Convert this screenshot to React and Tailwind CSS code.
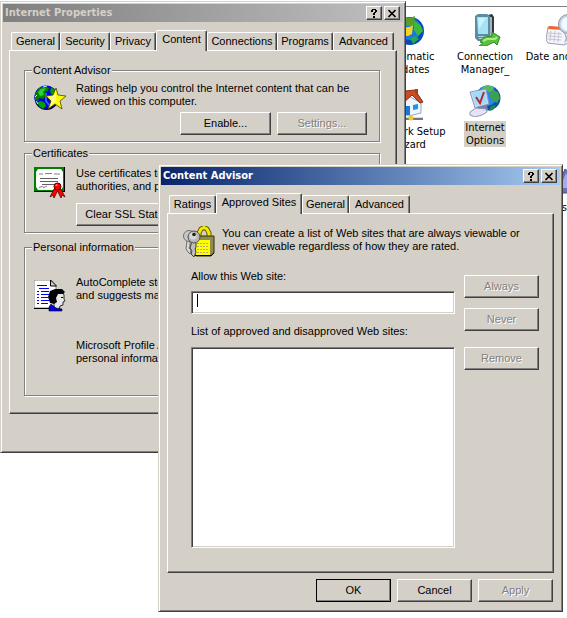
import { useState } from "react";
import clsx from "clsx";

const RAISED =
  "border border-t-white border-l-white border-r-[#404040] border-b-[#404040] shadow-[inset_-1px_-1px_0_#808080]";
const SUNKEN =
  "border border-t-[#808080] border-l-[#808080] border-r-white border-b-white shadow-[inset_1px_1px_0_#404040,inset_-1px_-1px_0_#d4d0c8]";

function Button({ children, disabled, isDefault, className }) {
  return (
    <button
      type="button"
      disabled={disabled}
      className={clsx(
        "h-[23px] shrink-0 bg-[#d4d0c8] text-center leading-[13px] whitespace-nowrap",
        RAISED,
        disabled && "text-[#808080] [text-shadow:1px_1px_0_#fff]",
        isDefault && "outline outline-1 -outline-offset-1 outline-black",
        className,
      )}
    >
      {children}
    </button>
  );
}

function CaptionButton({ label, children }) {
  return (
    <button
      type="button"
      aria-label={label}
      className={clsx("flex h-3.5 w-4 items-center justify-center bg-[#d4d0c8] text-black", RAISED)}
    >
      <svg width="10" height="9" viewBox="0 0 10 9" fill="none" stroke="currentColor" aria-hidden>
        {children}
      </svg>
    </button>
  );
}

function Dialog({ title, active, className, children }) {
  return (
    <section
      aria-label={title}
      className={clsx(
        "z-10 self-start border border-t-[#d4d0c8] border-r-[#404040] border-b-[#404040] border-l-[#d4d0c8] bg-[#d4d0c8] p-0.5 shadow-[inset_1px_1px_0_#fff,inset_-1px_-1px_0_#808080] [grid-area:1/1]",
        className,
      )}
    >
      <header
        className={clsx(
          "flex h-[18px] items-center bg-linear-to-r pr-[3px] pl-0.5",
          active ? "from-[#0a246a] to-[#a6caf0] text-white" : "from-[#808080] to-[#c0c0c0] text-[#d4d0c8]",
        )}
      >
        <h2 className="flex-1 truncate font-['DejaVu_Sans_Condensed','DejaVu_Sans',sans-serif] text-[11px] leading-4 font-bold">
          {title}
        </h2>
        <div className="flex gap-0.5">
          <CaptionButton label="Help">
            <g fill="currentColor" stroke="none" shapeRendering="crispEdges">
              <path d="M3 0H7V1H3ZM2 1H4V3H2ZM6 1H8V3H6ZM5 3H7V4H5ZM4 4H6V6H4ZM4 7H6V9H4Z" />
            </g>
          </CaptionButton>
          <CaptionButton label="Close">
            <path d="M1.5 1L8.5 8M8.5 1L1.5 8" strokeWidth="1.7" />
          </CaptionButton>
        </div>
      </header>
      <div className="px-1.5 pt-2">{children}</div>
    </section>
  );
}

function Tabs({ tabs, initial }) {
  const [current, setCurrent] = useState(initial);
  return (
    <div role="tablist" className="flex h-5 items-end pl-0.5">
      {tabs.map(({ name, width }) => (
        <button
          key={name}
          type="button"
          role="tab"
          aria-selected={name === current}
          onClick={() => setCurrent(name)}
          className={clsx(
            "shrink-0 rounded-t-[2px] border-t border-r border-l border-t-white border-r-[#404040] border-l-white bg-[#d4d0c8] text-center leading-[13px] whitespace-nowrap shadow-[inset_-1px_0_0_#808080]",
            name === current ? "z-10 -mb-px h-[21px] pb-1" : "h-[18px]",
            width,
          )}
        >
          {name}
        </button>
      ))}
    </div>
  );
}

function Group({ title, className, children }) {
  return (
    <fieldset
      className={clsx(
        "min-w-0 border border-[#808080] pr-3 pb-1.5 pl-[9px] shadow-[inset_1px_1px_0_#fff,1px_1px_0_#fff]",
        className,
      )}
    >
      <legend className="-ml-0.5 bg-[#d4d0c8] px-px leading-[13px]">{title}</legend>
      {children}
    </fieldset>
  );
}

function RatingsIcon() {
  return (
    <svg width="32" height="26" viewBox="0 0 32 26" className="shrink-0" aria-hidden>
      <circle cx="12.500" cy="13" r="12" fill="#000040" />
      <circle cx="12" cy="12" r="11.500" fill="#0000e0" />
      <path d="M1 9L5 3L11 1L15 3L14 6L11 7L12 11L9 14L5 13L4 16L1 15Z" fill="#008000" />
      <path d="M4 7L7 4L12 3L9 7L10 10L6 11Z" fill="#30d030" />
      <path d="M3 17L7 16L11 18L12 21L9 24L5 21Z" fill="#00a000" />
      <path d="M17 2L21 5L23 9L19 11L16 7Z" fill="#00a000" />
      <path d="M1 12L3 10M2 16L4 19M9 2L13 1" stroke="#a0ffff" />
      <path d="M12 8V16L16 21" stroke="#3060ff" strokeWidth="2" fill="none" />
      <path
        d="M22 3L24 10L32 11L26 16L28 24L21 19L14 24L17 16L12 11L19 10Z"
        fill="#ffff00"
        stroke="#504000"
        strokeWidth=".8"
      />
      <path d="M22 5V16L16 21L18 15L14 12L20 11Z" fill="#fff" opacity=".6" />
    </svg>
  );
}

function CertificateIcon() {
  return (
    <svg width="32" height="32" viewBox="0 0 32 32" className="shrink-0" aria-hidden>
      <path d="M0 0H31V25H0Z" fill="#008000" />
      <path d="M0 24.5H31M30.5 0V25" stroke="#000" />
      <path d="M4 2H27L29 5V20L27 23H4L2 20V5Z" fill="#fff" />
      <path d="M5 7H9M11 6.5H18M20 7H26" stroke="#808080" />
      <path d="M6 11.5H24M6 14.5H24M8 17.5H20" stroke="#606060" />
      <path d="M5 20.5L8 19.5L10 20.5L13 19" stroke="#808080" fill="none" />
      <path
        d="M20 22L16 30L19 28L20 31L23.500 24L27 31L28 28L31 30L27 22Z"
        fill="#ff0000"
        stroke="#600000"
        strokeWidth=".8"
      />
      <circle cx="23.5" cy="19.5" r="3.500" fill="#ff0000" stroke="#400000" />
      <path d="M22 19V18H23.500" stroke="#ffb0b0" fill="none" />
    </svg>
  );
}

function PersonalIcon() {
  return (
    <svg width="32" height="32" viewBox="0 0 32 32" className="shrink-0" aria-hidden>
      <path d="M0 0H17L22 6V28H0Z" fill="#fff" stroke="#808080" />
      <path d="M0 28.5H20" stroke="#000" />
      <path d="M16.5 0V6H22.5Z" stroke="#000" fill="#d4d0c8" />
      <path
        d="M3 5.5H13M5 8.5H15M3 11.5H5M7 11.5H15M3 14.5H5M7 14.5H15M3 17.5H5M7 17.5H14M3 20.5H5M7 20.5H15M3 23.5H5M7 23.5H14"
        stroke="#0000ff"
      />
      <path d="M21 13L28 11L30 15V19L31 21L29 22V25L26 26L25 30H20V20Z" fill="#e8e8e8" stroke="#000" strokeWidth=".8" />
      <path d="M14 17L16 11L21 9H28L31 12L29 14H24L22 18L23 22L20 24L16 23Z" fill="#000" />
      <path d="M17 24L22 28L28 29V31H15V27Z" fill="#0000e0" stroke="#000" strokeWidth=".6" />
      <path d="M27 17.5H29" stroke="#000" />
    </svg>
  );
}

function LockIcon() {
  return (
    <svg width="32" height="32" viewBox="0 0 32 32" className="shrink-0" aria-hidden>
      <path d="M16 14V7L18 3L21 1.500L24 3L26 7V14" fill="none" stroke="#605800" strokeWidth="5" />
      <path d="M16 14V7L18 3L21 1.500L24 3L26 7V14" fill="none" stroke="#f4ec00" strokeWidth="3" />
      <path d="M13 14L16 10H31V27L28 30H13Z" fill="#908c50" stroke="#303000" />
      <path d="M13 14H27V29H13Z" fill="#ffff00" />
      <path d="M14 17.500H26M14 20.500H26M14 23.500H26M14 26.500H26" stroke="#b8b060" strokeDasharray="2 1" />
      <path d="M12 29.500H28L31 27" fill="none" stroke="#000" />
      <path d="M4 14L7 16V20L6 22L8 24L7 28L5 26L3 23Z" fill="#d8d8d8" stroke="#707070" />
      <path d="M9 15L13 17V21L12 23L13 26L11 31L8 28L9 25L7 22Z" fill="#c0c0c0" stroke="#404040" />
      <circle cx="6" cy="10" r="5.500" fill="#c8c8c8" stroke="#707070" />
      <circle cx="11" cy="11" r="6" fill="#b8b8b8" stroke="#505050" />
      <circle cx="10" cy="10" r="3.500" fill="#d8d8d8" />
      <circle cx="11" cy="8.500" r="1.800" fill="#202020" />
    </svg>
  );
}

function UpdatesIcon() {
  return (
    <svg width="32" height="32" viewBox="0 0 32 32" aria-hidden>
      <circle cx="17" cy="17" r="14" fill="#0648bd" />
      <circle cx="17" cy="15" r="11" fill="#1677e8" />
      <path d="M21 7Q28 9 30 17L25 22L21 16Z" fill="#3cb93c" />
      <path d="M17 24L23 22L26 25L20 30Z" fill="#28a745" />
      <path d="M2 5L11 3V12L1 14Z" fill="#e5502c" />
      <path d="M11 2Q16 5 22 2L21 11Q17 13 11 11Z" fill="#5a9e2a" />
      <path d="M1 14L10 12V22L0 23Z" fill="#2674df" />
      <path d="M10 12Q15 15 20 11L19 20Q15 23 9 22Z" fill="#f7d51d" />
    </svg>
  );
}

function ConnectionIcon() {
  return (
    <svg width="32" height="32" viewBox="0 0 32 32" aria-hidden>
      <path d="M19 1L23 0L25 3V22L22 26L19 24Z" fill="#303840" />
      <path d="M22 3V22" stroke="#a6b4c0" strokeWidth="2" />
      <path d="M6 2L9 0H18L21 2V23L19 27H9L6 24Z" fill="#5c8ca4" />
      <path d="M8 3H19V20H9Z" fill="#a4e2f4" />
      <path d="M9 4H17L10 15Z" fill="#ccf2fc" />
      <path d="M9 22.500H19M10 24.500H18" stroke="#b0d4e0" />
      <path d="M11 28L15 23L23 22V18L31 23L28 31L25 28L17 32H10L14 29Z" fill="#5cc040" stroke="#2c8824" />
      <path d="M14 27L18 25L26 25L28 23" stroke="#a5ed80" strokeWidth="2" fill="none" />
    </svg>
  );
}

function DateIcon() {
  return (
    <svg width="32" height="32" viewBox="0 0 32 32" aria-hidden>
      <path d="M2 13L17 14L22 29L18 31L2 29L0 26Z" fill="#f5f5fb" stroke="#9a9db5" />
      <path d="M3 12L18 13V16L2 15Z" fill="#f0662c" />
      <path d="M2 19L16 20M2 22L16 23M1 25L15 26M5 17L4 27M9 17L8 28M13 18L12 28" stroke="#ccc4d4" />
      <path d="M18 30L24 22L21 20Z" fill="#a7acca" />
      <circle cx="22" cy="10" r="9.500" fill="#c5d4e5" stroke="#8794aa" />
      <circle cx="22" cy="10" r="7" fill="#eefaff" />
      <path d="M22 4V10H26" stroke="#d05030" fill="none" />
    </svg>
  );
}

function NetworkIcon() {
  return (
    <svg width="32" height="32" viewBox="0 0 32 32" aria-hidden>
      <path d="M4 14L14 6L28 14V24L16 27L4 22Z" fill="#eef5ff" stroke="#90a8c4" />
      <path d="M1 14L12 2L22 1L30 13L27 14L19 6L8 16Z" fill="#c84c24" stroke="#8c3018" />
      <path d="M22 0H25V7L22 4Z" fill="#a84020" />
      <path d="M13 17H17V26H13Z" fill="#1579d8" />
      <path d="M20 16L25 15V20L20 21Z" fill="#2390ee" />
      <path d="M2 29.500H30" stroke="#777" strokeWidth="3" />
      <path d="M3 28.500H30" stroke="#d8d8d8" />
      <circle cx="18" cy="29" r="2.500" fill="#f6c728" />
    </svg>
  );
}

function InternetIcon() {
  return (
    <svg width="32" height="32" viewBox="0 0 32 32" aria-hidden>
      <circle cx="19" cy="13" r="12.500" fill="#0b4fae" />
      <circle cx="18" cy="11" r="10" fill="#2689ea" />
      <path d="M12 3L18 0L25 2L24 6L20 7L17 5Z" fill="#58b860" />
      <path d="M23 5L29 7L31 13L28 18L23 15L20 10Z" fill="#3ca04c" />
      <path d="M22 21L27 20L24 25L20 26Z" fill="#1f8a4d" />
      <path d="M1 7L17 4L20 19L6 23Z" fill="#d1d5e8" stroke="#7c9cc4" />
      <path d="M3 8L16 6L18 18L7 20Z" fill="#9bddff" />
      <path d="M7 12L11 18L15 7" stroke="#b52b2b" strokeWidth="2" fill="none" />
      <path d="M8 22L18 20L19 25L8 26Z" fill="#7780a7" />
      <path d="M1 27L7 23L17 24L18 27L13 30L6 32L1 30Z" fill="#e2e4f3" stroke="#9095b7" />
    </svg>
  );
}

function PurpleIcon() {
  return (
    <svg width="32" height="32" viewBox="0 0 32 32" aria-hidden>
      <path d="M14 4L19 8L25 24V28H6V23Z" fill="#6b6fc0" stroke="#4b4f96" />
      <path d="M15 8L21 23H9Z" fill="#a7abeb" />
    </svg>
  );
}

const shortcuts = [
  { lines: ["Automatic", "Updates"], icon: <UpdatesIcon />, place: "left-[369px] top-3.5" },
  { lines: ["Connection", "Manager_"], icon: <ConnectionIcon />, place: "left-[445px] top-3.5" },
  { lines: ["Date and Time"], icon: <DateIcon />, place: "left-[522px] top-3.5" },
  { lines: ["Network Setup", "Wizard"], icon: <NetworkIcon />, place: "left-[369px] top-[89px]" },
  { lines: ["Internet", "Options"], icon: <InternetIcon />, place: "left-[445px] top-[85px]", selected: true },
  { lines: ["ss"], icon: <PurpleIcon />, place: "left-[527px] top-[165px]" },
];

function Shortcut({ lines, icon, place, selected }) {
  return (
    <a
      href="#"
      className={clsx(
        "absolute flex w-20 flex-col items-center gap-1 text-center font-['DejaVu_Sans_Condensed','DejaVu_Sans',sans-serif] text-[11px] leading-[13px] whitespace-nowrap",
        place,
      )}
    >
      {icon}
      <span className={clsx("px-px", selected && "bg-[#d4d0c8]")}>
        {lines.map((line) => (
          <span key={line} className="block">
            {line}
          </span>
        ))}
      </span>
    </a>
  );
}

const propertyTabs = [
  { name: "General", width: "w-[49px]" },
  { name: "Security", width: "w-[50px]" },
  { name: "Privacy", width: "w-[46px]" },
  { name: "Content", width: "w-[51px]" },
  { name: "Connections", width: "w-[70px]" },
  { name: "Programs", width: "w-[56px]" },
  { name: "Advanced", width: "w-[61px]" },
];

const advisorTabs = [
  { name: "Ratings", width: "w-[47px]" },
  { name: "Approved Sites", width: "w-[86px]" },
  { name: "General", width: "w-[47px]" },
  { name: "Advanced", width: "w-[61px]" },
];

function InternetProperties() {
  return (
    <Dialog title="Internet Properties" className="mt-px mr-[161px]">
      <Tabs tabs={propertyTabs} initial="Content" />
      <div role="tabpanel" className={clsx("mb-9 pt-[13px] pr-4 pb-[17px] pl-3.5", RAISED)}>
        <Group title="Content Advisor">
          <div className="flex gap-2.5 pt-[5px]">
            <div className="pt-[3px]">
              <RatingsIcon />
            </div>
            <div className="min-w-0 flex-1">
              <p className="whitespace-nowrap">
                Ratings help you control the Internet content that can be
                <br />
                viewed on this computer.
              </p>
              <div className="mt-1 flex justify-end gap-1.5">
                <Button className="w-[91px]">Enable...</Button>
                <Button className="w-[90px]" disabled>
                  Settings...
                </Button>
              </div>
            </div>
          </div>
        </Group>
        <Group title="Certificates" className="mt-[5px]">
          <div className="flex gap-2.5 pt-[7px]">
            <CertificateIcon />
            <div className="min-w-0 flex-1">
              <p className="whitespace-nowrap">
                Use certificates to positively identify yourself, certification
                <br />
                authorities, and publishers.
              </p>
              <Button className="mt-2.5 block w-[97px]">Clear SSL State</Button>
            </div>
          </div>
        </Group>
        <Group title="Personal information" className="mt-2">
          <div className="flex gap-2.5 pt-[22px] pb-6">
            <div className="pt-1">
              <PersonalIcon />
            </div>
            <div className="min-w-0 flex-1 whitespace-nowrap">
              <p>
                AutoComplete stores previous entries
                <br />
                and suggests matches for you.
              </p>
              <p className="mt-[37px]">
                Microsoft Profile Assistant stores your
                <br />
                personal information.
              </p>
            </div>
          </div>
        </Group>
      </div>
    </Dialog>
  );
}

function ContentAdvisor() {
  const [site, setSite] = useState("");
  return (
    <Dialog title="Content Advisor" active className="mt-[164px] mr-1 ml-[158px]">
      <Tabs tabs={advisorTabs} initial="Approved Sites" />
      <div role="tabpanel" className={clsx("pt-3 pr-3.5 pb-6 pl-[23px]", RAISED)}>
        <div className="-ml-2 flex gap-[7px]">
          <LockIcon />
          <p className="pt-px whitespace-nowrap">
            You can create a list of Web sites that are always viewable or
            <br />
            never viewable regardless of how they are rated.
          </p>
        </div>
        <div className="mt-3 flex gap-[9px]">
          <div className="min-w-0 flex-1">
            <label htmlFor="site" className="block">
              Allow this Web site:
            </label>
            <div className="relative mt-2">
              <input
                id="site"
                type="text"
                value={site}
                onChange={(e) => setSite(e.target.value)}
                className={clsx("block h-[23px] w-full bg-white px-1.5 caret-transparent outline-none", SUNKEN)}
              />
              {site === "" && <span className="absolute top-[3px] left-1.5 h-[13px] w-px bg-black" aria-hidden />}
            </div>
            <label htmlFor="sites" className="mt-[11px] block whitespace-nowrap">
              List of approved and disapproved Web sites:
            </label>
            <select
              id="sites"
              size={12}
              className={clsx("mt-[9px] block h-[201px] w-full appearance-none bg-white outline-none", SUNKEN)}
            />
          </div>
          <div className="flex w-[75px] flex-col pt-[5px]">
            <Button disabled>Always</Button>
            <Button disabled className="mt-2.5">
              Never
            </Button>
            <Button disabled className="mt-4">
              Remove
            </Button>
          </div>
        </div>
      </div>
      <div className="flex justify-end gap-1.5 pt-1.5 pr-px pb-[7px]">
        <Button isDefault className="w-[75px]">
          OK
        </Button>
        <Button className="w-[75px]">Cancel</Button>
        <Button disabled className="w-[75px]">
          Apply
        </Button>
      </div>
    </Dialog>
  );
}

export default function App() {
  return (
    <main className="relative grid min-h-screen grid-cols-[minmax(0,1fr)] overflow-hidden bg-white font-['Liberation_Sans',Arial,sans-serif] text-[11px] leading-[13px] text-black">
      <nav aria-label="Control Panel" className="mt-1.5 border-t border-[#808080] [grid-area:1/1]">
        {shortcuts.map((shortcut) => (
          <Shortcut key={shortcut.lines[0]} {...shortcut} />
        ))}
      </nav>
      <InternetProperties />
      <ContentAdvisor />
    </main>
  );
}
